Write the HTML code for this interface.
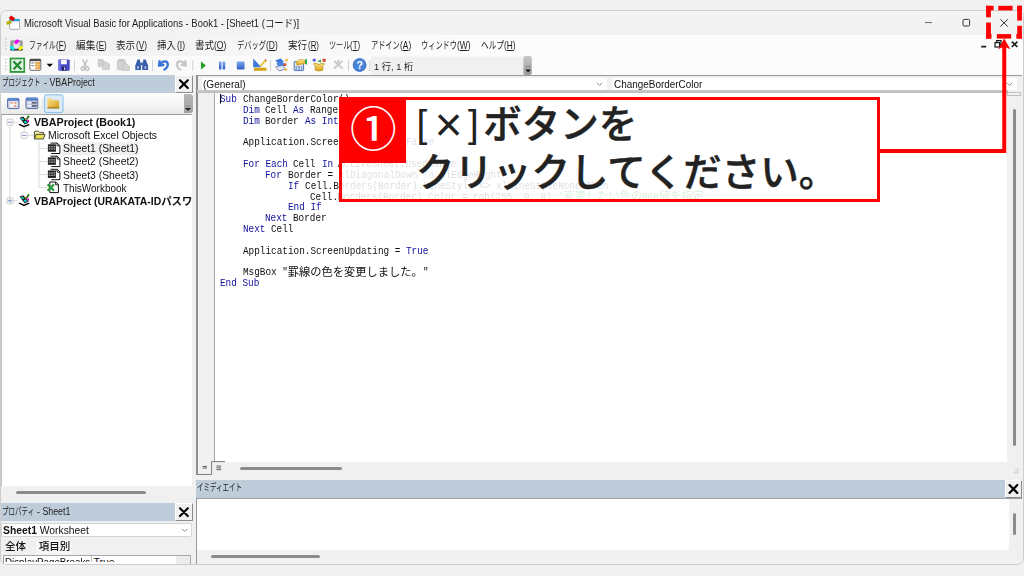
<!DOCTYPE html>
<html lang="ja">
<head>
<meta charset="utf-8">
<title>Microsoft Visual Basic for Applications - Book1 - [Sheet1 (コード)]</title>
<style>
*{box-sizing:border-box;margin:0;padding:0}
html,body{width:1024px;height:576px;overflow:hidden;background:#f1f1f1}
body{position:relative;font-family:"Liberation Sans","Noto Sans CJK JP",sans-serif;font-size:11px;color:#1a1a1a}
.a{position:absolute}
.t{position:absolute;white-space:pre;transform-origin:0 50%;display:block;filter:blur(0.3px)}
#win{left:0;top:10px;width:1024px;height:555px;background:#f0f0f0;border:1px solid #cdcdcd;border-radius:7px;overflow:hidden}
#titlebar{left:1px;top:11px;width:1022px;height:23.5px;background:#f3f3f3;border-radius:6px 6px 0 0}
#menubar{left:1px;top:34px;width:1022px;height:22px;background:linear-gradient(90deg,#f1f1f1 0,#f2f2f2 130px,#f8f8f8 300px,#fcfcfc 460px,#fcfcfc 100%)}
#toolbar{left:1px;top:56px;width:1022px;height:19px;background:#fcfcfc}
#tbband{left:2px;top:56.5px;width:522px;height:18.5px;background:#fafafa}
.hdr{background:#bfcddb}
.xbtn{background:#f0f0f0;border-right:1px solid #8c8c8c;border-bottom:1px solid #8c8c8c;border-top:1px solid #fff;border-left:1px solid #fff}
.thumb{background:#8b8b8b;border-radius:2px}
.white{background:#fff}
.sep{width:1px;background:#c6c6c6}
u{text-decoration-thickness:0.7px;text-underline-offset:0.6px}
</style>
</head>
<body>
<div class="a" id="win"></div>
<div class="a" id="menubar"></div>
<div class="a" id="titlebar"></div>
<div class="a" id="toolbar"></div>
<div class="a" id="tbband"></div>

<!-- project explorer -->
<div class="a hdr" style="left:1px;top:75px;width:174px;height:17.6px"></div>
<div class="a xbtn" style="left:175px;top:75px;width:18px;height:17.6px"></div>
<div class="a" style="left:1px;top:93px;width:192px;height:21px;background:linear-gradient(#ffffff,#f4f4f4 60%,#e9e9e9)"></div>
<div class="a" style="left:184px;top:94px;width:9px;height:19px;background:linear-gradient(#b5b5b5,#a2a2a2);border-radius:0 3px 3px 0"></div>
<div class="a white" style="left:1px;top:114px;width:190.6px;height:372px;border-top:1px solid #9a9a9a;border-left:1.4px solid #c2c2c2"></div>
<div class="a" style="left:62px;top:142px;width:77px;height:13px;background:#f0f0f0"></div>
<div class="a thumb" style="left:16px;top:491px;width:130px;height:3px"></div>
<!-- properties -->
<div class="a hdr" style="left:1px;top:503px;width:174px;height:18px"></div>
<div class="a xbtn" style="left:175px;top:503px;width:18px;height:18px"></div>
<div class="a white" style="left:1px;top:523px;width:191px;height:14px;border:1px solid #d4d4d4;border-radius:2px"></div>
<div class="a" style="left:36px;top:540px;width:36px;height:14px;background:#f7f7f7"></div>
<div class="a white" style="left:3px;top:555px;width:188px;height:9px;border:1px solid #a8a8a8;border-bottom:0"></div>
<div class="a" style="left:176px;top:556px;width:14px;height:8px;background:#ececec"></div>
<div class="a" style="left:4px;top:556px;width:172px;height:5.6px;overflow:hidden"><span class="a" style="left:0.5px;top:0px;line-height:12px;font-size:10.5px;color:#111;white-space:pre;transform-origin:0 50%;transform:scaleX(0.93)">DisplayPageBreaks</span><span class="a" style="left:87px;top:0;width:1px;height:8px;background:#c0c0c0"></span><span class="a" style="left:89.5px;top:0px;line-height:12px;font-size:10.5px;color:#111;white-space:pre">True</span></div>

<!-- code window -->
<div class="a" style="left:195.8px;top:75px;width:826.2px;height:400px;background:#f0f0f0;border-top:1px solid #9a9a9a;border-left:2px solid #8e8e8e"></div>
<div class="a white" style="left:201.5px;top:77.6px;width:405px;height:12.6px"></div>
<div class="a white" style="left:611.8px;top:77.6px;width:405px;height:12.6px"></div>
<div class="a" style="left:197px;top:90px;width:811px;height:3px;background:linear-gradient(#c9c9c9,#bdbdbd)"></div>
<div class="a white" style="left:214px;top:93px;width:793px;height:368.5px;border-left:1.7px solid #a6a6a6"></div>
<div class="a" style="left:1007px;top:92px;width:14px;height:4px;border:1px solid #bdbdbd;background:#f4f4f4"></div>
<div class="a thumb" style="left:1013px;top:109px;width:3px;height:337px"></div>
<div class="a thumb" style="left:240px;top:466.8px;width:102px;height:3px"></div>

<!-- immediate window -->
<div class="a hdr" style="left:196px;top:480px;width:810px;height:18px"></div>
<div class="a xbtn" style="left:1005px;top:480px;width:17px;height:18px"></div>
<div class="a" style="left:196px;top:498px;width:826px;height:1px;background:#a0a0a0"></div>
<div class="a white" style="left:196px;top:499px;width:813px;height:51px;border-left:1px solid #9a9a9a"></div>
<div class="a" style="left:196px;top:550px;width:1px;height:14px;background:#9a9a9a"></div>
<div class="a thumb" style="left:1013px;top:513px;width:3px;height:22px"></div>
<div class="a thumb" style="left:211px;top:555px;width:109px;height:3px"></div>

<!-- toolbar / title icons -->
<svg class="a" style="left:0;top:0" width="1024" height="576" viewBox="0 0 1024 576">
  <defs>
    <linearGradient id="gb" x1="0" y1="0" x2="0" y2="1"><stop offset="0" stop-color="#7fa6ee"/><stop offset="1" stop-color="#2f5fc4"/></linearGradient>
    <linearGradient id="gy" x1="0" y1="0" x2="0" y2="1"><stop offset="0" stop-color="#fbe38a"/><stop offset="1" stop-color="#dba514"/></linearGradient>
    <linearGradient id="gh" x1="0" y1="0" x2="0" y2="1"><stop offset="0" stop-color="#c6c6c6"/><stop offset="0.5" stop-color="#b0b0b0"/><stop offset="1" stop-color="#9c9c9c"/></linearGradient>
  </defs>
  <!-- status area + toolbar handle -->
  <rect x="371" y="56.5" width="153" height="18.5" fill="#f0f0f0"/>
  <rect x="523.4" y="56" width="8.4" height="19" rx="2" fill="url(#gh)"/>
  <rect x="525.4" y="66.4" width="5.4" height="1" fill="#8a8a8a"/>
  <path d="M525.3 69.6 h5.6 l-2.8 3z" fill="#111"/>
  <!-- app icon -->
  <rect x="9.6" y="19.3" width="10" height="10" rx="0.8" fill="#fff" stroke="#a3a3a3" stroke-width="0.9"/>
  <rect x="9.6" y="19" width="10" height="2.3" fill="#2aa4d9"/>
  <rect x="-2.6" y="-1.9" width="5.2" height="3.8" rx="0.8" fill="#e00000" transform="translate(11.9 18.3) rotate(35)"/>
  <rect x="-2.5" y="-1.6" width="5" height="3.2" rx="0.8" fill="#b3ae00" transform="translate(8.9 22.6) rotate(-20)"/>
  <!-- menu grip + icon -->
  <g fill="#c4c4c4"><rect x="5" y="38.3" width="1.6" height="1.2"/><rect x="5" y="41.6" width="1.6" height="1.2"/><rect x="5" y="44.9" width="1.6" height="1.2"/><rect x="5" y="48.2" width="1.6" height="1.2"/></g>
  <rect x="10.2" y="40.2" width="12.6" height="10.4" rx="1.5" fill="#9c9c9c"/>
  <rect x="13.6" y="42" width="6" height="6.4" fill="#e4e4e4"/>
  <rect x="10.2" y="49" width="12.6" height="1.6" rx="0.6" fill="#4a4a4a"/>
  <rect x="-2.4" y="-1.6" width="4.8" height="3.2" rx="0.9" fill="#f000f0" transform="translate(16.8 41.8) rotate(-40)"/>
  <rect x="-2.4" y="-1.6" width="4.8" height="3.2" rx="1.2" fill="#00e8e8" transform="translate(12.2 48) rotate(35)"/>
  <rect x="-2.4" y="-1.6" width="4.8" height="3.2" rx="1.2" fill="#f4f400" transform="translate(20.7 48) rotate(-35)"/>
  <!-- toolbar grip -->
  <g fill="#c4c4c4"><rect x="5" y="59" width="1.6" height="1.2"/><rect x="5" y="62.2" width="1.6" height="1.2"/><rect x="5" y="65.4" width="1.6" height="1.2"/><rect x="5" y="68.6" width="1.6" height="1.2"/></g>
  <!-- excel -->
  <rect x="10.6" y="58.6" width="13.6" height="13.3" fill="#fff" stroke="#2d9a3c" stroke-width="1.9"/>
  <rect x="11.6" y="59.6" width="11.6" height="11.3" fill="#e4f1e5"/><path d="M13.4 61.2 L21.4 69.4 M21.2 61.2 L13.6 69.2" stroke="#1f8a2e" stroke-width="2.2" fill="none"/>
  <!-- form -->
  <rect x="29.9" y="59.2" width="10.9" height="11.1" rx="0.8" fill="#fff" stroke="#6a6a6a" stroke-width="1"/>
  <rect x="29.9" y="59" width="10.9" height="2.2" fill="#4d4d4d"/>
  <rect x="35.4" y="62" width="4.6" height="7.4" fill="#e3a348"/><path d="M37.7 62 V69.4 M35.4 64.5 H40 M35.4 67 H40" stroke="#f5d9a8" stroke-width="0.5" fill="none"/>
  <rect x="31.2" y="62.4" width="3.2" height="1.2" fill="#9a9a9a"/><rect x="31.2" y="65" width="3.2" height="1.2" fill="#9a9a9a"/>
  <path d="M46.6 63.8 h6.4 l-3.2 3.3z" fill="#000"/>
  <!-- save -->
  <rect x="58.3" y="59.4" width="11.4" height="11.4" rx="1" fill="#4848c6"/>
  <rect x="58.3" y="59.4" width="2.2" height="11.4" rx="1" fill="#7a7ae6"/>
  <rect x="61" y="59.9" width="5.8" height="4.4" fill="#f4f6ff"/>
  <rect x="61.8" y="66.8" width="4.4" height="3.8" fill="#23235e"/>
  <rect x="64" y="67.4" width="1.3" height="2.4" fill="#d8d8f0"/>
  <!-- separators -->
  <g fill="#d2d2d2"><rect x="74" y="60" width="1" height="11"/><rect x="152" y="60" width="1" height="11"/><rect x="192.3" y="60" width="1" height="11"/><rect x="270" y="60" width="1" height="11"/><rect x="348" y="60" width="1" height="11"/><rect x="369.2" y="60" width="1" height="11"/></g>
  <!-- cut (disabled) -->
  <g stroke="#bdbdbd" fill="none" stroke-width="1.4"><path d="M82.6 59.6 L86.6 67 M87.4 59.6 L83.4 67"/><circle cx="82.8" cy="68.7" r="1.7"/><circle cx="87.2" cy="68.7" r="1.7"/></g>
  <!-- copy (disabled) -->
  <g fill="#d3d3d3" stroke="#c2c2c2" stroke-width="0.8"><path d="M98.3 59.6 h4.4 l1.6 1.6 v5.4 h-6z"/><path d="M102.6 62.4 h4.6 l2.2 2.2 v5 h-6.8z"/></g>
  <!-- paste (disabled) -->
  <g fill="#d3d3d3" stroke="#c2c2c2" stroke-width="0.8"><rect x="117.4" y="60.2" width="8.2" height="9.6" rx="0.8"/><rect x="119.6" y="59.3" width="3.8" height="2" fill="#c6c6c6"/><path d="M122.4 64 h4.6 l2.4 2.4 v4 h-7z"/></g>
  <!-- find (binoculars) -->
  <g fill="#3a5eae"><path d="M135.3 70 v-4.4 l2.2 -6.2 h2.3 l1.2 6.2 v4.4z"/><path d="M142.2 70 v-4.4 l1.2 -6.2 h2.3 l2.4 6.2 v4.4z"/><rect x="140.4" y="62.6" width="2.4" height="2.6"/></g>
  <g fill="#b9c9ee"><rect x="137.2" y="66.2" width="1.6" height="2.6"/><rect x="144.6" y="66.2" width="1.6" height="2.6"/></g>
  <!-- undo -->
  <path d="M159.6 61.2 L159 65.6 L163.4 65 M160 64.6 C162.4 60.6 167.6 60.2 167.8 64.4 C167.9 66.8 166.2 68.6 164.4 69.6" fill="none" stroke="#3a74d6" stroke-width="2.3" stroke-linecap="round" stroke-linejoin="round"/>
  <!-- redo (disabled) -->
  <path d="M185.2 61.2 L185.8 65.6 L181.4 65 M184.8 64.6 C182.4 60.6 177.2 60.2 177 64.4 C176.9 66.8 178.6 68.6 180.4 69.6" fill="none" stroke="#c6c6c6" stroke-width="2.2" stroke-linecap="round" stroke-linejoin="round"/>
  <!-- run / break / reset -->
  <path d="M201 61.4 L205.9 65.4 L201 69.4z" fill="#22a022"/>
  <rect x="219" y="61.6" width="2.5" height="7.8" rx="0.6" fill="url(#gb)"/><rect x="222.7" y="61.6" width="2.5" height="7.8" rx="0.6" fill="url(#gb)"/>
  <rect x="236.8" y="61.6" width="7.8" height="7.8" rx="0.8" fill="url(#gb)"/>
  <!-- design mode -->
  <path d="M253.2 58.8 L261.6 67.2 H253.2z" fill="#3f76dc"/>
  <path d="M259.2 65.8 L264.8 59.8 L266.4 61.2 L260.8 67z" fill="#e8c84a"/>
  <path d="M264.4 60 L265.6 58.9 L267 60.4 L266 61.6z" fill="#e0705a"/>
  <rect x="254" y="67.8" width="12.4" height="3" rx="0.5" fill="#d6a010"/>
  <!-- project explorer -->
  <g><path d="M275.2 60.2 l5.6 -1.6 l3.2 3.4 l-5.6 1.8z" fill="#3f78d8"/><path d="M276 63.6 l6.4 -1.6 l3.4 3.6 l-6.4 1.8z" fill="#4d86e0"/><path d="M275.6 66.8 l6.8 -1.4 l3.4 3.6 l-6.6 2z" fill="#dfe7f4" stroke="#5b6f98" stroke-width="0.7"/><circle cx="286.6" cy="60.2" r="1.4" fill="#f0b840"/><circle cx="285" cy="64.6" r="1.5" fill="#e05038"/><circle cx="285.8" cy="69.6" r="1.4" fill="#f0b840"/></g>
  <!-- properties -->
  <rect x="294.2" y="61.6" width="9.4" height="9" rx="0.8" fill="#dfe8f6" stroke="#4f72b0" stroke-width="1"/>
  <rect x="295.6" y="66" width="1.6" height="3.8" fill="#7f9fd4"/><rect x="298.2" y="66" width="1.6" height="3.8" fill="#7f9fd4"/><rect x="300.8" y="66" width="1.6" height="3.8" fill="#7f9fd4"/>
  <path d="M296 62.4 C297 59.4 302 58.6 305 60.4 L305 63.2 C302 64.6 299 64.4 297.2 65.4z" fill="url(#gy)" stroke="#b8860b" stroke-width="0.5"/>
  <path d="M305 59.2 L307 59.2 L307 65 L305 63.6z" fill="#2fa84a"/>
  <!-- object browser -->
  <path d="M313.4 63.8 l2.4 -0.6 l3.2 1.4 l3.2 -1.4 l2.2 0.6 l-1.6 2 v4.4 l-3.8 0.8 l-3.8 -0.8 v-4.4z" fill="url(#gy)" stroke="#b8860b" stroke-width="0.7"/>
  <circle cx="314.2" cy="60.1" r="1.7" fill="#5a5fe0"/>
  <path d="M321 59.6 L321 62.8 L317.4 61.2z" fill="#2fa84a"/>
  <rect x="322.6" y="58.8" width="3" height="3" fill="#d8402c"/>
  <!-- toolbox (disabled) -->
  <path d="M334 68.6 L342.4 61 M342.6 68.6 L334.2 61 M338.3 59.8 V63" fill="none" stroke="#cacaca" stroke-width="2"/>
  <!-- help -->
  <circle cx="359.6" cy="65" r="6.8" fill="#4a84d8"/>
  <circle cx="359.6" cy="65" r="6.3" fill="none" stroke="#3a6fc0" stroke-width="0.8"/>
  <text x="359.6" y="69" font-family="'Liberation Sans',sans-serif" font-size="10.5" font-weight="700" fill="#fff" text-anchor="middle">?</text>
  <!-- window controls -->
  <path d="M925 22.6 h7" stroke="#555" stroke-width="0.9" fill="none"/>
  <rect x="963" y="19.4" width="6.6" height="6.6" rx="1.2" fill="none" stroke="#333" stroke-width="1"/>
  <path d="M1000.4 19.3 L1007.8 26.6 M1007.8 19.3 L1000.4 26.6" stroke="#333" stroke-width="1" fill="none"/>
  <!-- MDI child controls -->
  <rect x="981.2" y="45.8" width="5" height="1.7" fill="#1a1a1a"/>
  <g fill="none" stroke="#1a1a1a" stroke-width="1.2"><rect x="995" y="42.6" width="4.6" height="4.4"/><path d="M996.6 42.4 V40.6 H1001 V44.8 H999.8"/></g>
  <path d="M1011.8 41.6 L1017.4 47 M1017.4 41.6 L1011.8 47" stroke="#1a1a1a" stroke-width="1.6" fill="none"/>
</svg>
<!-- panel chrome details -->
<svg class="a" style="left:0;top:0" width="1024" height="576" viewBox="0 0 1024 576">
  <defs>
    <linearGradient id="gf" x1="0" y1="0" x2="1" y2="1"><stop offset="0" stop-color="#fbe48c"/><stop offset="1" stop-color="#d79a1a"/></linearGradient>
    <linearGradient id="gw" x1="0" y1="0" x2="0" y2="1"><stop offset="0" stop-color="#5f8fe0"/><stop offset="1" stop-color="#4a74c0"/></linearGradient>
    </defs>
  <!-- left edge shade -->
  
  <!-- close buttons -->
  <g transform="translate(183.9 84.1)"><path d="M-3.9 -3.9 L3.9 3.9 M3.9 -3.9 L-3.9 3.9" stroke="#000" stroke-width="2.1" stroke-linecap="round" fill="none"/></g>
  <g transform="translate(183.9 512.2)"><path d="M-3.9 -3.9 L3.9 3.9 M3.9 -3.9 L-3.9 3.9" stroke="#000" stroke-width="2.1" stroke-linecap="round" fill="none"/></g>
  <g transform="translate(1013.4 489)"><path d="M-3.9 -3.9 L3.9 3.9 M3.9 -3.9 L-3.9 3.9" stroke="#000" stroke-width="2.1" stroke-linecap="round" fill="none"/></g>
  <!-- project toolbar icons -->
  <rect x="7.6" y="98.4" width="11.4" height="10.2" rx="1" fill="#c3cde2" stroke="#56709f" stroke-width="1"/><rect x="9.6" y="101.4" width="7.6" height="6" fill="#f4f6fb"/>
  <rect x="7.6" y="98.2" width="11.4" height="2.6" rx="0.8" fill="url(#gw)"/>
  <g fill="#f08a6a"><rect x="10.4" y="102.2" width="2.4" height="1.4"/><rect x="14" y="102.2" width="2.4" height="1.4"/><rect x="14" y="105" width="2.4" height="1.6"/></g>
  <rect x="26" y="98" width="11.8" height="10.6" rx="1" fill="#bcc6da" stroke="#56709f" stroke-width="1"/>
  <rect x="26" y="97.8" width="11.8" height="2.6" rx="0.8" fill="url(#gw)"/>
  <g fill="#5e6674"><rect x="32" y="102" width="4.6" height="1.6"/><rect x="32" y="105" width="4.6" height="1.8"/></g>
  <g fill="#fff"><rect x="27.4" y="102" width="3.6" height="1.4"/><rect x="27.4" y="105" width="3.6" height="1.6"/></g>
  <rect x="42.2" y="98" width="1" height="11" fill="#e0e0e0"/>
  <rect x="44.6" y="94.8" width="18.4" height="17.8" rx="1.6" fill="#dcebf8" stroke="#84bcec" stroke-width="1"/>
  <path d="M47.4 108.2 V99.6 Q47.4 98.6 48.4 98.6 H51.6 L52.8 100.2 H58.2 Q59.2 100.2 59.2 101.2 V108.2z" fill="url(#gf)"/>
  <rect x="47.4" y="107.4" width="11.8" height="1" fill="#8f6a14"/>
  <!-- project toolbar handle -->
  <rect x="185.2" y="105.4" width="5.6" height="1" fill="#8e8e8e"/>
  <path d="M185 108 h6 l-3 3z" fill="#222"/>
  <!-- tree lines -->
  <g stroke="#dadada" stroke-width="1" fill="none">
    <path d="M9.9 125.4 V197.8"/>
    <path d="M13 122.2 H18"/><path d="M13 200.8 H18"/>
    <path d="M24.2 128 V132.4"/><path d="M27.2 135.4 H33.5"/>
    <path d="M39 140.5 V187.5 H47"/><path d="M39 148.4 H47.5"/><path d="M39 161.5 H47.5"/><path d="M39 174.6 H47.5"/>
  </g>
  <g transform="translate(10 122.2)"><rect x="-3" y="-3" width="6" height="6" rx="0.8" fill="#fff" stroke="#c4c4c4" stroke-width="0.9"/></g><path d="M8 122.2 H12" stroke="#7f92cc" stroke-width="1"/>
  <g transform="translate(24.2 135.4)"><rect x="-3" y="-3" width="6" height="6" rx="0.8" fill="#fff" stroke="#c4c4c4" stroke-width="0.9"/></g><path d="M22.2 135.4 H26.2" stroke="#7f92cc" stroke-width="1"/>
  <g transform="translate(10 200.8)"><rect x="-3" y="-3" width="6" height="6" rx="0.8" fill="#fff" stroke="#c4c4c4" stroke-width="0.9"/></g><path d="M8 200.8 H12 M10 198.8 V202.8" stroke="#7f92cc" stroke-width="1"/>
  <g transform="translate(18 115.4)"><path d="M0.4 9.4 L6 12.2 L12 9.6 L10.4 8.6 L6 10.4 L1.8 8.4z" fill="#111"/>
      <path d="M1.6 2.4 L5.2 1.2 L10.6 7.4 L6.6 9.2z" fill="#1a1a1a"/>
      <path d="M2.6 3 L4.6 2.4 L6.4 4.4 L4.4 5.2z" fill="#00c8c8"/>
      <path d="M5.6 6.2 L7.6 5.4 L9.2 7.2 L7.2 8.2z" fill="#00e0e0"/>
      <path d="M7 4.6 L10.4 0.6 L11.4 1.4 L8.2 5.6z" fill="#3a3a1a"/>
      <rect x="9.4" y="0.2" width="1.8" height="1.8" fill="#0a8a0a" transform="rotate(40 10.3 1.1)"/>
      <rect x="9.2" y="4.4" width="1.8" height="2.2" fill="#c800c8"/>
      <rect x="7" y="3" width="1.6" height="1.6" fill="#9a9a00"/></g>
  <g transform="translate(18 194)"><path d="M0.4 9.4 L6 12.2 L12 9.6 L10.4 8.6 L6 10.4 L1.8 8.4z" fill="#111"/>
      <path d="M1.6 2.4 L5.2 1.2 L10.6 7.4 L6.6 9.2z" fill="#1a1a1a"/>
      <path d="M2.6 3 L4.6 2.4 L6.4 4.4 L4.4 5.2z" fill="#00c8c8"/>
      <path d="M5.6 6.2 L7.6 5.4 L9.2 7.2 L7.2 8.2z" fill="#00e0e0"/>
      <path d="M7 4.6 L10.4 0.6 L11.4 1.4 L8.2 5.6z" fill="#3a3a1a"/>
      <rect x="9.4" y="0.2" width="1.8" height="1.8" fill="#0a8a0a" transform="rotate(40 10.3 1.1)"/>
      <rect x="9.2" y="4.4" width="1.8" height="2.2" fill="#c800c8"/>
      <rect x="7" y="3" width="1.6" height="1.6" fill="#9a9a00"/></g>
  <!-- open folder -->
  <path d="M34.4 139 V132 Q34.4 131.2 35.2 131.2 H38.2 L39.4 132.4 H43.6 V134" fill="#f4f29a" stroke="#3a3a3a" stroke-width="0.9"/>
  <path d="M34.4 139 L36 134.4 H45 L43.4 139z" fill="#e8e050" stroke="#3a3a3a" stroke-width="0.9"/>
  <!-- sheets -->
  <g transform="translate(47.9 142.7)"><path d="M2.6 0.4 H9.4 L12 3 V10.8 H3.4" fill="#fff" stroke="#111" stroke-width="1"/>
      <path d="M9.2 0.4 V3.2 H12" fill="none" stroke="#111" stroke-width="0.9"/>
      <rect x="0" y="1.6" width="8" height="7.4" fill="#1c1c1c"/>
      <g fill="#9a9a9a"><rect x="0.8" y="3.3" width="1.7" height="1.5"/><rect x="3.2" y="3.3" width="1.7" height="1.5"/><rect x="5.6" y="3.3" width="1.7" height="1.5"/><rect x="0.8" y="5.6" width="1.7" height="1.5"/><rect x="3.2" y="5.6" width="1.7" height="1.5"/><rect x="5.6" y="5.6" width="1.7" height="1.5"/></g></g>
  <g transform="translate(47.9 155.8)"><path d="M2.6 0.4 H9.4 L12 3 V10.8 H3.4" fill="#fff" stroke="#111" stroke-width="1"/>
      <path d="M9.2 0.4 V3.2 H12" fill="none" stroke="#111" stroke-width="0.9"/>
      <rect x="0" y="1.6" width="8" height="7.4" fill="#1c1c1c"/>
      <g fill="#9a9a9a"><rect x="0.8" y="3.3" width="1.7" height="1.5"/><rect x="3.2" y="3.3" width="1.7" height="1.5"/><rect x="5.6" y="3.3" width="1.7" height="1.5"/><rect x="0.8" y="5.6" width="1.7" height="1.5"/><rect x="3.2" y="5.6" width="1.7" height="1.5"/><rect x="5.6" y="5.6" width="1.7" height="1.5"/></g></g>
  <g transform="translate(47.9 168.9)"><path d="M2.6 0.4 H9.4 L12 3 V10.8 H3.4" fill="#fff" stroke="#111" stroke-width="1"/>
      <path d="M9.2 0.4 V3.2 H12" fill="none" stroke="#111" stroke-width="0.9"/>
      <rect x="0" y="1.6" width="8" height="7.4" fill="#1c1c1c"/>
      <g fill="#9a9a9a"><rect x="0.8" y="3.3" width="1.7" height="1.5"/><rect x="3.2" y="3.3" width="1.7" height="1.5"/><rect x="5.6" y="3.3" width="1.7" height="1.5"/><rect x="0.8" y="5.6" width="1.7" height="1.5"/><rect x="3.2" y="5.6" width="1.7" height="1.5"/><rect x="5.6" y="5.6" width="1.7" height="1.5"/></g></g>
  <!-- thisworkbook -->
  <path d="M49.8 182 H55.8 L58.4 184.6 V192.6 H49.8z" fill="#fff" stroke="#111" stroke-width="1"/>
  <path d="M55.6 182 V184.8 H58.4" fill="none" stroke="#111" stroke-width="0.9"/>
  <path d="M47.6 184.4 L54 190.6 M54 184.4 L47.6 190.6" stroke="#2f9a3e" stroke-width="2.2" fill="none"/>
  <!-- combo chevrons -->
  <g fill="none" stroke="#8a8a8a" stroke-width="1">
    <path d="M597 82.8 L599.6 85.4 L602.2 82.8"/>
    <path d="M1007 82.8 L1009.6 85.4 L1012.2 82.8"/>
    <path d="M182 528.8 L184.7 531.5 L187.4 528.8"/>
  </g>
  <!-- code view buttons -->
  <g fill="none" stroke="#7d7d7d" stroke-width="1">
    <path d="M197.5 474.5 H211.6 V461.6 H225"/>
    
  </g>
  <g fill="#555"><rect x="202.6" y="466" width="4.4" height="0.9"/><rect x="202.6" y="467.6" width="4.4" height="0.9"/>
  <rect x="216.4" y="465.6" width="4.6" height="0.9"/><rect x="216.4" y="467.4" width="4.6" height="0.9"/><rect x="216.4" y="469.2" width="4.6" height="0.9"/></g>
  <!-- resize grip -->
  <g fill="#c2c2c2"><rect x="1017.4" y="468" width="1.2" height="1.2"/><rect x="1015.4" y="470" width="1.2" height="1.2"/><rect x="1017.4" y="470" width="1.2" height="1.2"/><rect x="1013.4" y="472" width="1.2" height="1.2"/><rect x="1015.4" y="472" width="1.2" height="1.2"/><rect x="1017.4" y="472" width="1.2" height="1.2"/></g>
  <!-- text cursor -->
  <rect x="220" y="94" width="1" height="9.6" fill="#000"/>
</svg>

<span class="t" style="left:24px;top:15.50px;line-height:15px;font-size:10.5px;font-weight:400;color:#1c1c1c;font-family:'Liberation Sans','Noto Sans CJK JP',sans-serif;transform:scaleX(0.8999);">Microsoft Visual Basic for Applications - Book1 - [Sheet1 (コード)]</span>
<span class="t" style="left:29px;top:39.30px;line-height:14px;font-size:10px;font-weight:400;color:#1c1c1c;font-family:'Liberation Sans','Noto Sans CJK JP',sans-serif;transform:scaleX(0.6700);">ファイル</span>
<span class="t" style="left:56.2px;top:38.20px;line-height:15px;font-size:10.5px;font-weight:400;color:#1c1c1c;font-family:'Liberation Sans','Noto Sans CJK JP',sans-serif;transform:scaleX(0.7674);">(<u>F</u>)</span>
<span class="t" style="left:76px;top:39.30px;line-height:14px;font-size:10px;font-weight:400;color:#1c1c1c;font-family:'Liberation Sans','Noto Sans CJK JP',sans-serif;transform:scaleX(0.9650);">編集</span>
<span class="t" style="left:95.7px;top:38.20px;line-height:15px;font-size:10.5px;font-weight:400;color:#1c1c1c;font-family:'Liberation Sans','Noto Sans CJK JP',sans-serif;transform:scaleX(0.7706);">(<u>E</u>)</span>
<span class="t" style="left:116px;top:39.30px;line-height:14px;font-size:10px;font-weight:400;color:#1c1c1c;font-family:'Liberation Sans','Noto Sans CJK JP',sans-serif;transform:scaleX(0.9600);">表示</span>
<span class="t" style="left:135.6px;top:38.20px;line-height:15px;font-size:10.5px;font-weight:400;color:#1c1c1c;font-family:'Liberation Sans','Noto Sans CJK JP',sans-serif;transform:scaleX(0.7848);">(<u>V</u>)</span>
<span class="t" style="left:157px;top:39.30px;line-height:14px;font-size:10px;font-weight:400;color:#1c1c1c;font-family:'Liberation Sans','Noto Sans CJK JP',sans-serif;transform:scaleX(0.9550);">挿入</span>
<span class="t" style="left:176.5px;top:38.20px;line-height:15px;font-size:10.5px;font-weight:400;color:#1c1c1c;font-family:'Liberation Sans','Noto Sans CJK JP',sans-serif;transform:scaleX(0.8063);">(<u>I</u>)</span>
<span class="t" style="left:195px;top:39.30px;line-height:14px;font-size:10px;font-weight:400;color:#1c1c1c;font-family:'Liberation Sans','Noto Sans CJK JP',sans-serif;transform:scaleX(0.9525);">書式</span>
<span class="t" style="left:214.45px;top:38.20px;line-height:15px;font-size:10.5px;font-weight:400;color:#1c1c1c;font-family:'Liberation Sans','Noto Sans CJK JP',sans-serif;transform:scaleX(0.8107);">(<u>O</u>)</span>
<span class="t" style="left:236.75px;top:39.30px;line-height:14px;font-size:10px;font-weight:400;color:#1c1c1c;font-family:'Liberation Sans','Noto Sans CJK JP',sans-serif;transform:scaleX(0.7263);">デバッグ</span>
<span class="t" style="left:266.2px;top:38.20px;line-height:15px;font-size:10.5px;font-weight:400;color:#1c1c1c;font-family:'Liberation Sans','Noto Sans CJK JP',sans-serif;transform:scaleX(0.8086);">(<u>D</u>)</span>
<span class="t" style="left:288px;top:39.30px;line-height:14px;font-size:10px;font-weight:400;color:#1c1c1c;font-family:'Liberation Sans','Noto Sans CJK JP',sans-serif;transform:scaleX(0.9550);">実行</span>
<span class="t" style="left:307.5px;top:38.20px;line-height:15px;font-size:10.5px;font-weight:400;color:#1c1c1c;font-family:'Liberation Sans','Noto Sans CJK JP',sans-serif;transform:scaleX(0.7537);">(<u>R</u>)</span>
<span class="t" style="left:328.5px;top:39.30px;line-height:14px;font-size:10px;font-weight:400;color:#1c1c1c;font-family:'Liberation Sans','Noto Sans CJK JP',sans-serif;transform:scaleX(0.7100);">ツール</span>
<span class="t" style="left:350.2px;top:38.20px;line-height:15px;font-size:10.5px;font-weight:400;color:#1c1c1c;font-family:'Liberation Sans','Noto Sans CJK JP',sans-serif;transform:scaleX(0.7600);">(<u>T</u>)</span>
<span class="t" style="left:371px;top:39.30px;line-height:14px;font-size:10px;font-weight:400;color:#1c1c1c;font-family:'Liberation Sans','Noto Sans CJK JP',sans-serif;transform:scaleX(0.7163);">アドイン</span>
<span class="t" style="left:400.05px;top:38.20px;line-height:15px;font-size:10.5px;font-weight:400;color:#1c1c1c;font-family:'Liberation Sans','Noto Sans CJK JP',sans-serif;transform:scaleX(0.7991);">(<u>A</u>)</span>
<span class="t" style="left:421px;top:39.30px;line-height:14px;font-size:10px;font-weight:400;color:#1c1c1c;font-family:'Liberation Sans','Noto Sans CJK JP',sans-serif;transform:scaleX(0.7200);">ウィンドウ</span>
<span class="t" style="left:457.4px;top:38.20px;line-height:15px;font-size:10.5px;font-weight:400;color:#1c1c1c;font-family:'Liberation Sans','Noto Sans CJK JP',sans-serif;transform:scaleX(0.8037);">(<u>W</u>)</span>
<span class="t" style="left:481px;top:39.30px;line-height:14px;font-size:10px;font-weight:400;color:#1c1c1c;font-family:'Liberation Sans','Noto Sans CJK JP',sans-serif;transform:scaleX(0.7667);">ヘルプ</span>
<span class="t" style="left:504.4px;top:38.20px;line-height:15px;font-size:10.5px;font-weight:400;color:#1c1c1c;font-family:'Liberation Sans','Noto Sans CJK JP',sans-serif;transform:scaleX(0.7949);">(<u>H</u>)</span>
<span class="t" style="left:374px;top:59.80px;line-height:13px;font-size:9.5px;font-weight:400;color:#1c1c1c;font-family:'Liberation Sans','Noto Sans CJK JP',sans-serif;transform:scaleX(0.9819);">1 行, 1 桁</span>
<span class="t" style="left:2px;top:76.20px;line-height:14px;font-size:9.8px;font-weight:400;color:#222;font-family:'Liberation Sans','Noto Sans CJK JP',sans-serif;transform:scaleX(0.6533);">プロジェクト</span>
<span class="t" style="left:44px;top:76.00px;line-height:14px;font-size:10px;font-weight:400;color:#222;font-family:'Liberation Sans','Noto Sans CJK JP',sans-serif;transform:scaleX(0.8856);">- VBAProject</span>
<span class="t" style="left:33.6px;top:115.10px;line-height:15px;font-size:10.5px;font-weight:700;color:#111;font-family:'Liberation Sans','Noto Sans CJK JP',sans-serif;transform:scaleX(1.0164);">VBAProject (Book1)</span>
<span class="t" style="left:48px;top:128.20px;line-height:15px;font-size:10.5px;font-weight:400;color:#111;font-family:'Liberation Sans','Noto Sans CJK JP',sans-serif;transform:scaleX(0.9936);">Microsoft Excel Objects</span>
<span class="t" style="left:62.5px;top:141.30px;line-height:15px;font-size:10.5px;font-weight:400;color:#111;font-family:'Liberation Sans','Noto Sans CJK JP',sans-serif;transform:scaleX(0.9873);">Sheet1 (Sheet1)</span>
<span class="t" style="left:62.5px;top:154.40px;line-height:15px;font-size:10.5px;font-weight:400;color:#111;font-family:'Liberation Sans','Noto Sans CJK JP',sans-serif;transform:scaleX(0.9873);">Sheet2 (Sheet2)</span>
<span class="t" style="left:62.5px;top:167.50px;line-height:15px;font-size:10.5px;font-weight:400;color:#111;font-family:'Liberation Sans','Noto Sans CJK JP',sans-serif;transform:scaleX(0.9873);">Sheet3 (Sheet3)</span>
<span class="t" style="left:62.5px;top:180.60px;line-height:15px;font-size:10.5px;font-weight:400;color:#111;font-family:'Liberation Sans','Noto Sans CJK JP',sans-serif;transform:scaleX(0.9489);">ThisWorkbook</span>
<span class="t" style="left:33.6px;top:193.70px;line-height:15px;font-size:10.5px;font-weight:700;color:#111;font-family:'Liberation Sans','Noto Sans CJK JP',sans-serif;transform:scaleX(0.9898);">VBAProject (URAKATA-IDパスワ</span>
<span class="t" style="left:2px;top:504.70px;line-height:14px;font-size:9.8px;font-weight:400;color:#222;font-family:'Liberation Sans','Noto Sans CJK JP',sans-serif;transform:scaleX(0.6652);">プロパティ</span>
<span class="t" style="left:37px;top:504.50px;line-height:14px;font-size:10px;font-weight:400;color:#222;font-family:'Liberation Sans','Noto Sans CJK JP',sans-serif;transform:scaleX(0.8807);">- Sheet1</span>
<span class="t" style="left:3px;top:523.00px;line-height:15px;font-size:11px;font-weight:400;color:#111;font-family:'Liberation Sans','Noto Sans CJK JP',sans-serif;transform:scaleX(0.9397);"><b>Sheet1</b> Worksheet</span>
<span class="t" style="left:5px;top:538.90px;line-height:15px;font-size:10.5px;font-weight:500;color:#111;font-family:'Liberation Sans','Noto Sans CJK JP',sans-serif;transform:scaleX(1.0000);">全体</span>
<span class="t" style="left:38.8px;top:538.90px;line-height:15px;font-size:10.5px;font-weight:500;color:#111;font-family:'Liberation Sans','Noto Sans CJK JP',sans-serif;transform:scaleX(1.0000);">項目別</span>
<span class="t" style="left:202.5px;top:76.50px;line-height:15px;font-size:10.5px;font-weight:400;color:#111;font-family:'Liberation Sans','Noto Sans CJK JP',sans-serif;transform:scaleX(0.9581);">(General)</span>
<span class="t" style="left:613.5px;top:76.50px;line-height:15px;font-size:10.5px;font-weight:400;color:#111;font-family:'Liberation Sans','Noto Sans CJK JP',sans-serif;transform:scaleX(0.9455);">ChangeBorderColor</span>
<span class="t" style="left:196.8px;top:481.10px;line-height:14px;font-size:9.8px;font-weight:400;color:#222;font-family:'Liberation Sans','Noto Sans CJK JP',sans-serif;transform:scaleX(0.6627);">イミディエイト</span>
<span class="t" style="left:220.25px;top:91.25px;line-height:17px;font-size:11.8px;font-weight:400;color:#10109a;font-family:'Liberation Mono','Noto Sans CJK JP',monospace;transform:scaleX(0.7943);">Sub </span>
<span class="t" style="left:242.75px;top:91.25px;line-height:17px;font-size:11.8px;font-weight:400;color:#101010;font-family:'Liberation Mono','Noto Sans CJK JP',monospace;transform:scaleX(0.7945);">ChangeBorderColor()</span>
<span class="t" style="left:242.75px;top:102.06px;line-height:17px;font-size:11.8px;font-weight:400;color:#10109a;font-family:'Liberation Mono','Noto Sans CJK JP',monospace;transform:scaleX(0.7943);">Dim </span>
<span class="t" style="left:265.25px;top:102.06px;line-height:17px;font-size:11.8px;font-weight:400;color:#101010;font-family:'Liberation Mono','Noto Sans CJK JP',monospace;transform:scaleX(0.7944);">Cell </span>
<span class="t" style="left:293.38px;top:102.06px;line-height:17px;font-size:11.8px;font-weight:400;color:#10109a;font-family:'Liberation Mono','Noto Sans CJK JP',monospace;transform:scaleX(0.7941);">As </span>
<span class="t" style="left:310.25px;top:102.06px;line-height:17px;font-size:11.8px;font-weight:400;color:#101010;font-family:'Liberation Mono','Noto Sans CJK JP',monospace;transform:scaleX(0.7944);">Range</span>
<span class="t" style="left:242.75px;top:112.87px;line-height:17px;font-size:11.8px;font-weight:400;color:#10109a;font-family:'Liberation Mono','Noto Sans CJK JP',monospace;transform:scaleX(0.7943);">Dim </span>
<span class="t" style="left:265.25px;top:112.87px;line-height:17px;font-size:11.8px;font-weight:400;color:#101010;font-family:'Liberation Mono','Noto Sans CJK JP',monospace;transform:scaleX(0.7945);">Border </span>
<span class="t" style="left:304.62px;top:112.87px;line-height:17px;font-size:11.8px;font-weight:400;color:#10109a;font-family:'Liberation Mono','Noto Sans CJK JP',monospace;transform:scaleX(0.7945);">As Integer</span>
<span class="t" style="left:242.75px;top:134.49px;line-height:17px;font-size:11.8px;font-weight:400;color:#101010;font-family:'Liberation Mono','Noto Sans CJK JP',monospace;transform:scaleX(0.7945);">Application.ScreenUpdating = </span>
<span class="t" style="left:405.88px;top:134.49px;line-height:17px;font-size:11.8px;font-weight:400;color:#10109a;font-family:'Liberation Mono','Noto Sans CJK JP',monospace;transform:scaleX(0.7944);">False</span>
<span class="t" style="left:242.75px;top:156.11px;line-height:17px;font-size:11.8px;font-weight:400;color:#10109a;font-family:'Liberation Mono','Noto Sans CJK JP',monospace;transform:scaleX(0.7945);">For Each </span>
<span class="t" style="left:293.38px;top:156.11px;line-height:17px;font-size:11.8px;font-weight:400;color:#101010;font-family:'Liberation Mono','Noto Sans CJK JP',monospace;transform:scaleX(0.7944);">Cell </span>
<span class="t" style="left:321.5px;top:156.11px;line-height:17px;font-size:11.8px;font-weight:400;color:#10109a;font-family:'Liberation Mono','Noto Sans CJK JP',monospace;transform:scaleX(0.7941);">In </span>
<span class="t" style="left:338.38px;top:156.11px;line-height:17px;font-size:11.8px;font-weight:400;color:#101010;font-family:'Liberation Mono','Noto Sans CJK JP',monospace;transform:scaleX(0.7945);">ActiveSheet.UsedRange</span>
<span class="t" style="left:265.25px;top:166.92px;line-height:17px;font-size:11.8px;font-weight:400;color:#10109a;font-family:'Liberation Mono','Noto Sans CJK JP',monospace;transform:scaleX(0.7943);">For </span>
<span class="t" style="left:287.75px;top:166.92px;line-height:17px;font-size:11.8px;font-weight:400;color:#101010;font-family:'Liberation Mono','Noto Sans CJK JP',monospace;transform:scaleX(0.7946);">Border = xlDiagonalDown </span>
<span class="t" style="left:422.75px;top:166.92px;line-height:17px;font-size:11.8px;font-weight:400;color:#10109a;font-family:'Liberation Mono','Noto Sans CJK JP',monospace;transform:scaleX(0.7941);">To </span>
<span class="t" style="left:439.62px;top:166.92px;line-height:17px;font-size:11.8px;font-weight:400;color:#101010;font-family:'Liberation Mono','Noto Sans CJK JP',monospace;transform:scaleX(0.7945);">xlEdgeRight</span>
<span class="t" style="left:287.75px;top:177.73px;line-height:17px;font-size:11.8px;font-weight:400;color:#10109a;font-family:'Liberation Mono','Noto Sans CJK JP',monospace;transform:scaleX(0.7941);">If </span>
<span class="t" style="left:304.62px;top:177.73px;line-height:17px;font-size:11.8px;font-weight:400;color:#101010;font-family:'Liberation Mono','Noto Sans CJK JP',monospace;transform:scaleX(0.7946);">Cell.Borders(Border).LineStyle &lt;&gt; xlLineStyleNone </span>
<span class="t" style="left:585.88px;top:177.73px;line-height:17px;font-size:11.8px;font-weight:400;color:#10109a;font-family:'Liberation Mono','Noto Sans CJK JP',monospace;transform:scaleX(0.7943);">Then</span>
<span class="t" style="left:310.25px;top:188.54px;line-height:17px;font-size:11.8px;font-weight:400;color:#101010;font-family:'Liberation Mono','Noto Sans CJK JP',monospace;transform:scaleX(0.7945);">Cell.Borders(Border).Color = rgb(255, 0, 0) </span>
<span class="t" style="left:557.75px;top:188.54px;line-height:17px;font-size:11.8px;font-weight:400;color:#0a8a0a;font-family:'Liberation Mono','Noto Sans CJK JP',monospace;transform:scaleX(0.7930);">'</span>
<span class="t" style="left:563.38px;top:188.04px;line-height:16px;font-size:11.25px;font-weight:400;color:#0a8a0a;font-family:'Liberation Sans','Noto Sans CJK JP',sans-serif;">変更したい色の</span>
<span class="t" style="left:642.12px;top:188.54px;line-height:17px;font-size:11.8px;font-weight:400;color:#0a8a0a;font-family:'Liberation Mono','Noto Sans CJK JP',monospace;transform:scaleX(0.7941);">RGB</span>
<span class="t" style="left:659.0px;top:188.04px;line-height:16px;font-size:11.25px;font-weight:400;color:#0a8a0a;font-family:'Liberation Sans','Noto Sans CJK JP',sans-serif;">値を指定</span>
<span class="t" style="left:287.75px;top:199.35px;line-height:17px;font-size:11.8px;font-weight:400;color:#10109a;font-family:'Liberation Mono','Noto Sans CJK JP',monospace;transform:scaleX(0.7944);">End If</span>
<span class="t" style="left:265.25px;top:210.16px;line-height:17px;font-size:11.8px;font-weight:400;color:#10109a;font-family:'Liberation Mono','Noto Sans CJK JP',monospace;transform:scaleX(0.7944);">Next </span>
<span class="t" style="left:293.38px;top:210.16px;line-height:17px;font-size:11.8px;font-weight:400;color:#101010;font-family:'Liberation Mono','Noto Sans CJK JP',monospace;transform:scaleX(0.7944);">Border</span>
<span class="t" style="left:242.75px;top:220.97px;line-height:17px;font-size:11.8px;font-weight:400;color:#10109a;font-family:'Liberation Mono','Noto Sans CJK JP',monospace;transform:scaleX(0.7944);">Next </span>
<span class="t" style="left:270.88px;top:220.97px;line-height:17px;font-size:11.8px;font-weight:400;color:#101010;font-family:'Liberation Mono','Noto Sans CJK JP',monospace;transform:scaleX(0.7943);">Cell</span>
<span class="t" style="left:242.75px;top:242.59px;line-height:17px;font-size:11.8px;font-weight:400;color:#101010;font-family:'Liberation Mono','Noto Sans CJK JP',monospace;transform:scaleX(0.7945);">Application.ScreenUpdating = </span>
<span class="t" style="left:405.88px;top:242.59px;line-height:17px;font-size:11.8px;font-weight:400;color:#10109a;font-family:'Liberation Mono','Noto Sans CJK JP',monospace;transform:scaleX(0.7943);">True</span>
<span class="t" style="left:242.75px;top:264.21px;line-height:17px;font-size:11.8px;font-weight:400;color:#101010;font-family:'Liberation Mono','Noto Sans CJK JP',monospace;transform:scaleX(0.7945);">MsgBox "</span>
<span class="t" style="left:287.75px;top:263.71px;line-height:16px;font-size:11.25px;font-weight:400;color:#101010;font-family:'Liberation Sans','Noto Sans CJK JP',sans-serif;">罫線の色を変更しました。</span>
<span class="t" style="left:422.75px;top:264.21px;line-height:17px;font-size:11.8px;font-weight:400;color:#101010;font-family:'Liberation Mono','Noto Sans CJK JP',monospace;transform:scaleX(0.7930);">"</span>
<span class="t" style="left:220.25px;top:275.02px;line-height:17px;font-size:11.8px;font-weight:400;color:#10109a;font-family:'Liberation Mono','Noto Sans CJK JP',monospace;transform:scaleX(0.7945);">End Sub</span>
<!-- callout annotation -->
<div class="a" style="left:339px;top:97px;width:541px;height:105px;background:rgba(255,255,255,0.86);border:3px solid #ff0000"></div>
<div class="a" style="left:339px;top:97px;width:67px;height:66px;background:#ff0000"></div>
<svg class="a" style="left:0;top:0" width="1024" height="576" viewBox="0 0 1024 576">
  <path d="M880 151 H1004.25 V46" fill="none" stroke="#ff0000" stroke-width="4" stroke-linejoin="miter"/>
  <path d="M1004.2 38.6 L1010.4 49.2 L1004.2 46.4 L998.2 49.2 Z" fill="#ff0000"/>
  <g fill="#ff0000">
    <rect x="986.1" y="5.8" width="7.5" height="4.6"/>
    <rect x="998.3" y="5.8" width="14.3" height="4.6"/>
    <rect x="1017.2" y="5.8" width="4.7" height="4.6"/>
    <rect x="1017.2" y="5.8" width="4.7" height="14.8"/>
    <rect x="1017.2" y="25.8" width="4.7" height="12.8"/>
    <rect x="986.1" y="34.1" width="5.4" height="4.5"/>
    <rect x="996.8" y="34.1" width="14.4" height="4.5"/>
    <rect x="1016.3" y="34.1" width="5.6" height="4.5"/>
    <rect x="986.1" y="5.8" width="4.8" height="11.5"/>
    <rect x="986.1" y="22.5" width="4.8" height="16.1"/>
  </g>
</svg>
<span class="a" style="left:343.4px;top:98.2px;width:60px;height:64px;line-height:64px;text-align:center;font-size:46.6px;font-weight:500;color:#fff;font-family:'Liberation Sans','Noto Sans CJK JP',sans-serif">①</span>
<span class="a" style="left:416.6px;top:98.6px;line-height:50px;font-size:38.5px;white-space:pre;color:#222;font-family:'Liberation Sans','Noto Sans CJK JP',sans-serif">[</span>
<span class="a" style="left:434.6px;top:100.2px;line-height:50px;font-size:48px;white-space:pre;color:#222;font-family:'Liberation Sans','Noto Sans CJK JP',sans-serif">×</span>
<span class="a" style="left:468px;top:98.6px;line-height:50px;font-size:38.5px;white-space:pre;color:#222;font-family:'Liberation Sans','Noto Sans CJK JP',sans-serif">]</span>
<span class="a" style="left:483.2px;top:100px;line-height:50px;font-size:38.5px;font-weight:500;-webkit-text-stroke:0.5px #222;white-space:pre;color:#222;font-family:'Liberation Sans','Noto Sans CJK JP',sans-serif">ボタンを</span>
<span class="a" style="left:416px;top:148.3px;line-height:50px;font-size:38.5px;font-weight:500;-webkit-text-stroke:0.5px #222;white-space:pre;color:#222;font-family:'Liberation Sans','Noto Sans CJK JP',sans-serif">クリックしてください。</span>

</body>
</html>
